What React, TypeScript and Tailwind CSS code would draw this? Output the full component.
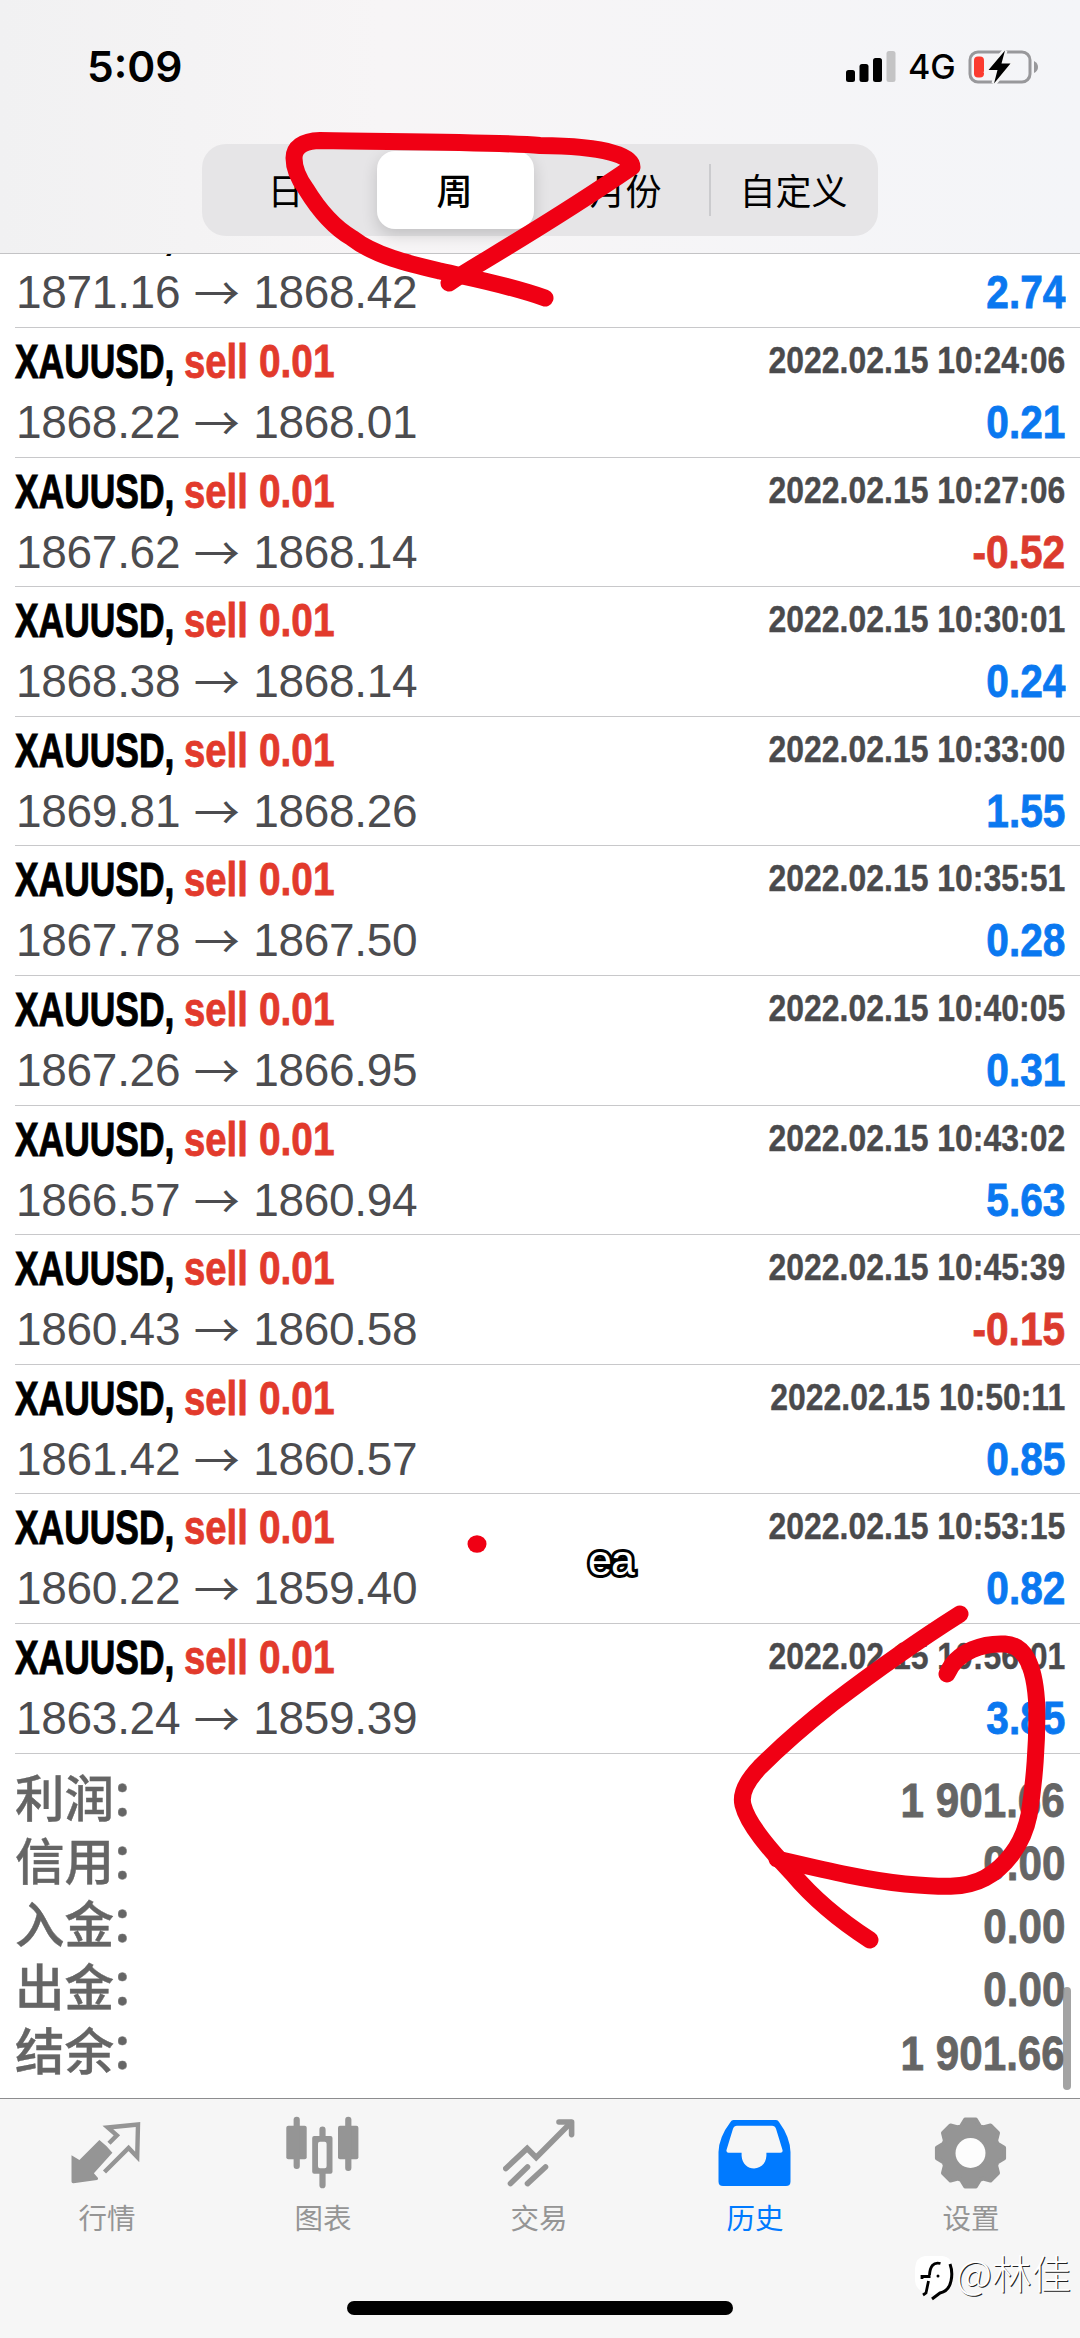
import { clsx } from 'clsx';

const deals = [
  { open: '1871.16', close: '1868.42', time: '', profit: '2.74' },
  { open: '1868.22', close: '1868.01', time: '2022.02.15 10:24:06', profit: '0.21' },
  { open: '1867.62', close: '1868.14', time: '2022.02.15 10:27:06', profit: '-0.52' },
  { open: '1868.38', close: '1868.14', time: '2022.02.15 10:30:01', profit: '0.24' },
  { open: '1869.81', close: '1868.26', time: '2022.02.15 10:33:00', profit: '1.55' },
  { open: '1867.78', close: '1867.50', time: '2022.02.15 10:35:51', profit: '0.28' },
  { open: '1867.26', close: '1866.95', time: '2022.02.15 10:40:05', profit: '0.31' },
  { open: '1866.57', close: '1860.94', time: '2022.02.15 10:43:02', profit: '5.63' },
  { open: '1860.43', close: '1860.58', time: '2022.02.15 10:45:39', profit: '-0.15' },
  { open: '1861.42', close: '1860.57', time: '2022.02.15 10:50:11', profit: '0.85' },
  { open: '1860.22', close: '1859.40', time: '2022.02.15 10:53:15', profit: '0.82' },
  { open: '1863.24', close: '1859.39', time: '2022.02.15 10:56:01', profit: '3.85' },
];

const summary = [
  { label: '利润', value: '1 901.66' },
  { label: '信用', value: '0.00' },
  { label: '入金', value: '0.00' },
  { label: '出金', value: '0.00' },
  { label: '结余', value: '1 901.66' },
];

const gearPoints = Array.from({ length: 8 }, (_, i) =>
  [[-19, 28.5], [-9, 34], [9, 34], [19, 28.5]].map(([deg, r]) => {
    const a = ((i * 45 + deg) * Math.PI) / 180;
    return `${(35.5 + r * Math.sin(a)).toFixed(2)},${(37 - r * Math.cos(a)).toFixed(2)}`;
  }).join(' ')
).join(' ');

const QuotesIcon = () => (
  <svg viewBox="0 0 73 73" className="h-[73px] w-[73px]" fill="currentColor">
    <path d="M.5 39.3 8.4 44 28.4 24Q35 29 41.4 36.7L22.9 57.3 27 62Q27.5 63.5 26 64L2.5 67.3Q.5 67.5.5 65.5Z" />
    <path
      d="M38 27.3 45.9 19.3 36.8 11.5 67 8.5 66.2 41 57.6 32 33.5 56"
      fill="none"
      stroke="currentColor"
      strokeWidth="4.4"
      strokeLinejoin="miter"
    />
  </svg>
);

const ChartIcon = () => (
  <svg viewBox="0 0 73 73" className="h-[73px] w-[73px] overflow-visible" fill="currentColor">
    <rect x="-.7" y="9.7" width="20.4" height="33.6" rx="2" />
    <rect x="6.6" y=".7" width="6.2" height="52.3" rx="3" />
    <path fillRule="evenodd" d="M27.2 20h16.3q2 0 2 2v33.7q0 2-2 2H27.2q-2 0-2-2V22q0-2 2-2ZM33 25.7q-2 0-2 2v22.6q0 2 2 2h4.6q2 0 2-2V27.7q0-2-2-2Z" />
    <path d="M32.4 20v-6.3a3.1 3.1 0 0 1 6.2 0V20ZM32.4 57v12.2a3.1 3.1 0 0 0 6.2 0V57Z" />
    <rect x="51" y="9.7" width="20.4" height="33.6" rx="2" />
    <rect x="58.2" y=".7" width="6.2" height="54.3" rx="3" />
  </svg>
);

const TradeIcon = () => (
  <svg viewBox="0 0 73 73" className="h-[73px] w-[73px]" fill="none" stroke="currentColor" strokeWidth="5.6" strokeLinecap="round">
    <path d="M2.8 52.500 24.2 32.500 33.2 41.500 68 6.6" strokeLinejoin="miter" />
    <path d="M56 6H68.600V18.600" strokeLinejoin="round" />
    <path d="M7.500 67.600 24.500 51M24.500 67.600 42.500 51" />
  </svg>
);

const HistoryIcon = () => (
  <svg viewBox="0 0 73 73" className="h-[73px] w-[73px] overflow-visible" fill="currentColor">
    <path
      fillRule="evenodd"
      d="M14.5 4H57q2 0 3 2 11 15 11.5 30v29.500q0 4.500-4.500 4.500H4Q-.5 70-.5 65.500V36Q0 21 11.500 6q1-2 3-2ZM18 9.700q-3 0-4 3L7.500 34q-.5 2.700 2 2.700H22.600v3c1 17 24 17 24.800 0v-3H61.500q2.600 0 2-2.700L57 12.700q-1-3-4-3Z"
    />
  </svg>
);

const SettingsIcon = () => (
  <svg viewBox="0 0 73 73" className="h-[73px] w-[73px] overflow-visible">
    <polygon points={gearPoints} fill="currentColor" stroke="currentColor" strokeWidth="4" strokeLinejoin="round" />
    <circle cx="35.500" cy="37" r="15" fill="#fdfdfd" />
  </svg>
);

const tabs = [
  { label: '行情', Icon: QuotesIcon },
  { label: '图表', Icon: ChartIcon },
  { label: '交易', Icon: TradeIcon },
  { label: '历史', Icon: HistoryIcon, active: true },
  { label: '设置', Icon: SettingsIcon },
];

const StatusBar = () => (
  <div className="flex h-[132px] items-start justify-between pl-[87px] pr-[41px] pt-[46px] text-black">
    <span className="font-['Inter'] text-[42.500px] font-semibold leading-[42px]">5:09</span>
    <div className="flex items-center pt-1">
      <svg viewBox="0 0 50 32" className="h-8 w-[50px]">
        <rect y="19" width="9" height="12" rx="2.500" />
        <rect x="13.500" y="13" width="9" height="18" rx="2.500" />
        <rect x="27" y="7" width="9" height="24" rx="2.500" />
        <rect x="40.500" width="9" height="31" rx="2.500" fill="#c4c4c5" />
      </svg>
      <span className="ml-3 w-[60px] font-['Inter'] text-[34px] font-medium leading-8">4G</span>
      <svg viewBox="0 0 71 34" className="h-[34px] w-[71px]">
        <rect x="2" y="2" width="60" height="30" rx="8" fill="none" stroke="#98989b" strokeWidth="3" />
        <rect x="6" y="6.500" width="10" height="21" rx="4" fill="#fb3b30" />
        <path d="M66 11q4 2 4 6t-4 6Z" fill="#98989b" />
        <path d="M37 .5 20.500 20h9L26 33.500 42.500 13.500H33.500Z" stroke="#f5f5f6" strokeWidth="5" />
        <path d="M37 .5 20.500 20h9L26 33.500 42.500 13.500H33.500Z" />
      </svg>
    </div>
  </div>
);

const PeriodPicker = () => (
  <div className="ml-[202px] mt-3 grid h-[92px] w-[676px] grid-cols-4 rounded-[24px] bg-[#e6e5e7] font-['Noto_Sans_CJK_SC',sans-serif] text-[36px] leading-none text-black">
    <div className="flex items-center justify-center pb-[3px] pr-0.5">日</div>
    <div className="mx-[6px] my-[7px] flex items-center justify-center rounded-[18px] bg-white pb-[3px] pr-0.5 font-medium shadow-[0_6px_16px_rgba(0,0,0,0.16)]">
      周
    </div>
    <div className="flex items-center justify-center pb-[3px] pl-0.5">月份</div>
    <div className="flex items-center">
      <div className="h-[52px] w-0.5 bg-[#cbcbce]" />
      <div className="flex-1 pb-[3px] pr-0.5 text-center">自定义</div>
    </div>
  </div>
);

const DealRow = ({ open, close, time, profit }: (typeof deals)[number]) => (
  <div className="ml-[15px] h-[129.6px] shrink-0 whitespace-nowrap border-b border-[#c8c8ca] pr-[15px] pt-1 font-['Liberation_Sans',sans-serif]">
    <div className="flex h-[58px] items-start text-[48.500px] font-bold leading-[58px]">
      <div className="w-[169px]">
        <span className="inline-block origin-left scale-x-[0.73] text-black [-webkit-text-stroke:1px_#000]">XAUUSD,</span>
      </div>
      {time && (
        <>
          <div className="w-[75px] text-[#e23a2c]">
            <span className="inline-block origin-left scale-x-[0.79] [-webkit-text-stroke:0.8px_#e23a2c]">sell</span>
          </div>
          <div className="w-[90px] text-[47px] text-[#e23a2c]">
            <span className="inline-block origin-left scale-x-[0.825] [-webkit-text-stroke:0.8px_#e23a2c]">0.01</span>
          </div>
          <span className="ml-auto mt-px inline-block origin-right scale-x-[0.852] text-[37.500px] leading-[54px] text-[#4a4a4c] [-webkit-text-stroke:0.4px_#4a4a4c]">
            {time}
          </span>
        </>
      )}
    </div>
    <div className="mt-0.5 flex h-[60px] items-center justify-between text-[46px] leading-[60px]">
      <div className="flex pl-px text-[#4c4c4f]">
        <span className="tracking-[-0.3px]">{open}</span>
        <span className="w-[73px] text-center font-['Noto_Sans_CJK_SC',sans-serif] leading-[56px]">→</span>
        <span className="tracking-[-0.3px]">{close}</span>
      </div>
      <span
        className={clsx(
          'inline-block origin-right scale-x-[0.865] text-[47px] font-bold',
          profit.startsWith('-')
            ? 'text-[#dc3b2e] [-webkit-text-stroke:0.8px_#dc3b2e]'
            : 'text-[#0a78f0] [-webkit-text-stroke:0.8px_#0a78f0]'
        )}
      >
        {profit}
      </span>
    </div>
  </div>
);

const Summary = () => (
  <div className="shrink-0 pb-[18px] pl-[15px] pr-[15px] pt-[10px] text-[#656565]">
    {summary.map((item) => (
      <div key={item.label} className="flex h-[63.300px] items-baseline justify-between leading-[63.300px]">
        <div className="flex font-['Noto_Sans_CJK_SC',sans-serif] text-[49.500px] font-medium [-webkit-text-stroke:0.4px_#656565]">
          <span>{item.label}</span>
          <span className="-ml-1 -translate-y-px font-medium">：</span>
        </div>
        <span className="inline-block origin-right scale-x-[0.87] font-['Liberation_Sans',sans-serif] text-[48.500px] font-bold [-webkit-text-stroke:0.8px_#656565]">
          {item.value}
        </span>
      </div>
    ))}
  </div>
);

const TabBar = () => (
  <nav className="h-[240px] border-t border-[#8d8d8f] bg-[#f6f6f6]">
    <div className="-ml-px mr-px grid grid-cols-5 pt-[17px]">
      {tabs.map(({ label, Icon, active }) => (
        <div key={label} className={clsx('flex flex-col items-center', active ? 'text-[#007aff]' : 'text-[#959595]')}>
          <Icon />
          <span className="mt-3 font-['Noto_Sans_CJK_SC',sans-serif] text-[28.500px] leading-8">{label}</span>
        </div>
      ))}
    </div>
    <div className="mx-auto mt-[68px] h-[14px] w-[386px] rounded-full bg-black" />
  </nav>
);

// red pen marks drawn over the list
const PenMarks = () => (
  <svg
    viewBox="0 0 1080 2338"
    className="pointer-events-none absolute inset-0 h-full w-full"
    fill="none"
    stroke="#f00014"
    strokeWidth="17"
    strokeLinecap="round"
    strokeLinejoin="round"
  >
    <path d="M449 283C470 268 540 230 632 167C632 156 606 146 540 145.500C500 142 420 142 320 140.500C302 141 294 148 294 158C294 168 298 178 306 189C320 212 335 228 352 238C375 256 410 264 440 271C475 279 505 284 545 298" />
    <path d="M960 1614Q900 1652 833 1703Q790 1737 760 1767Q739 1789 743 1805C748 1825 770 1850 792 1873Q822 1909 870 1940" />
    <path d="M947 1674C957 1650 985 1643 1005 1644C1025 1645 1034 1665 1036.500 1700C1038 1740 1034 1785 1029 1815C1023 1845 1005 1867 985 1878C965 1889 940 1887 905 1884C865 1880 820 1869 777 1859" />
    <ellipse cx="477" cy="1544" rx="9.500" ry="8.700" fill="#f00014" stroke="none" />
  </svg>
);

const Watermark = () => (
  <div className="absolute bottom-[37px] right-[9px] flex items-center">
    <svg viewBox="0 0 46 46" className="mr-[-3px] mt-1 h-[46px] w-[46px]" fill="none">
      <path d="M12 1h17q11 1 11 14v9q0 11-10 14l-7 5-3-4Q3 38 2 26V13Q3 2 12 1Z" fill="#fff" />
      <path d="M27.500 8.500C20 6.500 17 12 16.500 20M9 21.500h8.500M9 20v4M15.500 26 13 38l-3 2" stroke="#000" strokeWidth="2.800" />
      <path d="M37 9Q40 17 38 26 36 36 27 38L19 44" stroke="#000" strokeWidth="3" />
      <circle cx="25" cy="21" r="1.500" fill="#000" />
    </svg>
    <span className="-mt-2 font-['Noto_Sans_CJK_SC',sans-serif] text-[39.500px] font-light leading-[46px] text-white [text-shadow:1px_1px_0_#222]">
      @林佳
    </span>
  </div>
);

const App = () => {
  return (
    <div className="relative flex h-[2338px] w-[1080px] flex-col overflow-hidden bg-white">
      <header className="h-[254px] border-b border-[#c3c3c5] bg-gradient-to-r from-[#f1f1f2] via-[#f7f5f6] via-35% to-[#f4f5f8]">
        <StatusBar />
        <PeriodPicker />
      </header>

      <main className="flex h-[1844px] flex-col justify-end overflow-hidden">
        {deals.map((deal) => (
          <DealRow key={deal.open} {...deal} />
        ))}
        <Summary />
      </main>

      <TabBar />

      <div className="absolute left-[1063px] top-[1987px] h-[103px] w-2 rounded-full bg-[#8c8c8c]/80" />
      <span className="absolute left-[588px] top-[1535px] font-['Liberation_Sans',sans-serif] text-[43px] leading-[50px] tracking-[-1px] text-white [-webkit-text-stroke:6px_#000] [paint-order:stroke_fill]">
        ea
      </span>
      <PenMarks />
      <Watermark />
    </div>
  );
};

export default App;
